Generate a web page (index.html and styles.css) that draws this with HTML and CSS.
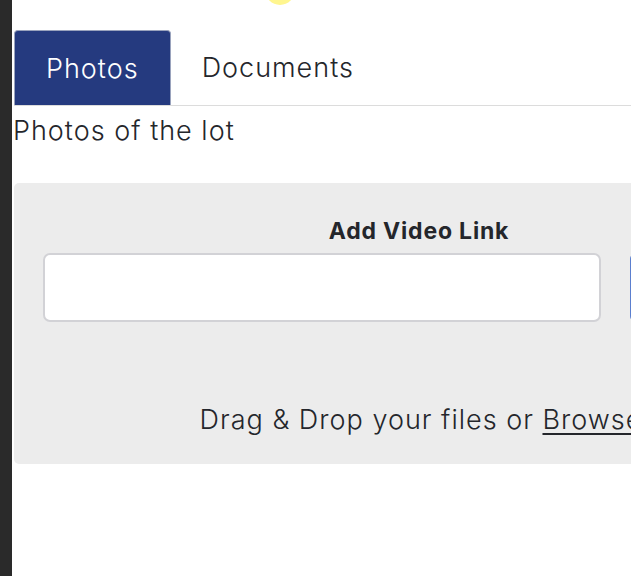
FILE: index.html
```html
<!DOCTYPE html>
<html>
<head>
<meta charset="utf-8">
<link rel="stylesheet" href="styles.css">
</head>
<body>
<div class="frame">
  <div class="sidebar"></div>
  <main class="content">
    <div class="highlight"></div>
    <nav class="tabs">
      <div class="tab active">Photos</div>
      <div class="tab">Documents</div>
    </nav>
    <p class="caption">Photos of the lot</p>
    <section class="panel">
      <div class="video-block">
        <label class="video-label" for="video">Add Video Link</label>
        <div class="video-row">
          <input id="video" class="video-input" type="text">
          <button class="video-btn" type="button"></button>
        </div>
      </div>
      <div class="drop-zone">
        <span class="drop-text">Drag &amp; Drop your files or <u class="browse">Browse</u></span>
      </div>
    </section>
  </main>
</div>
</body>
</html>
```
FILE: styles.css
```css
* { box-sizing: border-box; }
html, body {
  margin: 0;
  padding: 0;
  width: 631px;
  height: 576px;
  overflow: hidden;
  background: #ffffff;
  font-family: "Inter", "Lato", sans-serif;
  font-weight: 300;
  color: #24262b;
}
.frame {
  display: flex;
  width: 900px;
  height: 576px;
}
.sidebar {
  flex: 0 0 12px;
  background: #2a2a2a;
}
.content {
  position: relative;
  flex: 1;
  padding: 30px 0 0 2px;
}
.highlight {
  position: absolute;
  left: 253px;
  top: -25px;
  width: 30px;
  height: 30px;
  border-radius: 50%;
  background: #fff68f;
}
.tabs {
  display: flex;
  border-bottom: 1px solid #dcdcdc;
  height: 76px;
}
.tab {
  padding: 0 31px;
  height: 75px;
  display: flex;
  align-items: center;
  font-size: 27px;
  letter-spacing: 1px;
  color: #24262b;
  border-radius: 4px 4px 0 0;
}
.tab.active {
  background: #253a7f;
  color: #ffffff;
  border: 1px solid #9aa3bd;
  border-bottom: none;
}
.caption {
  margin: 8px 0 0 -1px;
  font-size: 27px;
  letter-spacing: 1px;
  line-height: 34px;
}
.panel {
  margin-top: 35px;
  width: 810px;
  background: #ececec;
  border-radius: 5px;
}
.video-block {
  padding: 33px 29px 50px;
  height: 190px;
}
.video-label {
  display: block;
  text-align: center;
  font-size: 23px;
  font-weight: 700;
  letter-spacing: 0.8px;
  line-height: 30px;
  color: #24262b;
  margin-bottom: 7px;
}
.video-row {
  display: flex;
  gap: 29px;
}
.video-input {
  width: 558px;
  height: 69px;
  border: 2px solid #d2d2d6;
  border-radius: 7px;
  background: #ffffff;
  outline: none;
}
.video-btn {
  flex: 1;
  height: 69px;
  border: 2px solid #5b7fcf;
  border-radius: 6px;
  background: #ececec;
}
.drop-zone {
  height: 91px;
  display: flex;
  align-items: center;
  justify-content: center;
  padding-top: 2px;
}
.drop-text {
  font-size: 27px;
  letter-spacing: 1px;
  color: #24262b;
  padding-left: 4px;
}
.browse {
  text-underline-offset: 4px;
}
```
